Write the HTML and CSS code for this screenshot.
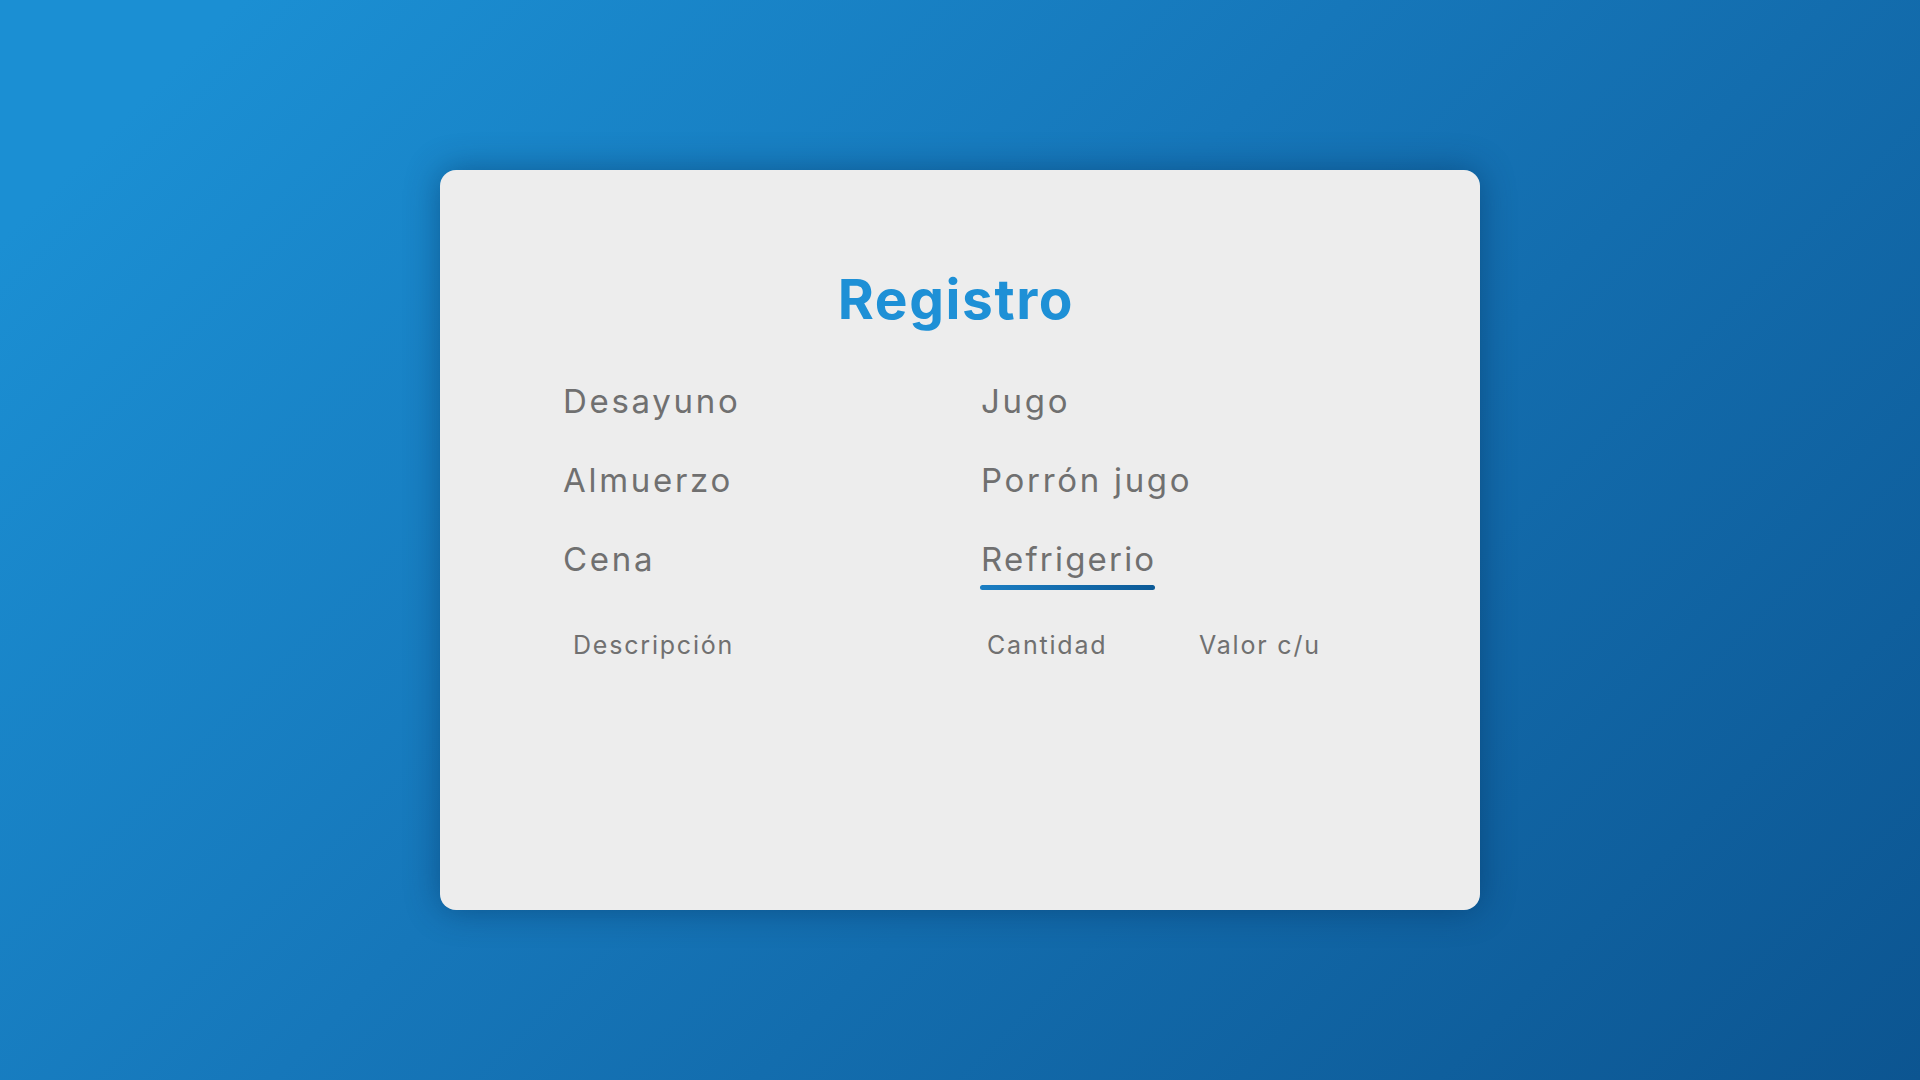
FILE: index.html
```html
<!DOCTYPE html>
<html lang="es">
<head>
<meta charset="utf-8">
<title>Registro</title>
<link rel="stylesheet" href="styles.css">
</head>
<body>
<main class="card">
  <h1 class="title">Registro</h1>
  <ul class="menu">
    <li class="item">Desayuno</li>
    <li class="item">Jugo</li>
    <li class="item">Almuerzo</li>
    <li class="item">Porrón jugo</li>
    <li class="item">Cena</li>
    <li class="item active">Refrigerio</li>
  </ul>
  <div class="table-head">
    <span class="th th-desc">Descripción</span>
    <span class="th th-qty">Cantidad</span>
    <span class="th th-val">Valor c/u</span>
  </div>
</main>
</body>
</html>
```
FILE: styles.css
```css
html, body {
  margin: 0;
  padding: 0;
  height: 100%;
}
body {
  font-family: "Inter", "Noto Sans", sans-serif;
  background: linear-gradient(135deg, #1b8fd3 8%, #1677ba 45%, #0c5591 100%);
  display: flex;
  align-items: center;
  justify-content: center;
  min-height: 100vh;
}
.card {
  box-sizing: border-box;
  width: 1040px;
  height: 740px;
  background: #ededed;
  border-radius: 16px;
  box-shadow: 0 0 34px rgba(5, 40, 80, 0.45);
  padding: 96px 123px 0 123px;
  display: flex;
  flex-direction: column;
}
.title {
  margin: 0 8px 0 0;
  text-align: center;
  font-size: 55px;
  line-height: 66px;
  font-weight: 700;
  color: #1e90d6;
  letter-spacing: 1.6px;
}
.menu {
  list-style: none;
  margin: 49px 0 0 0;
  padding: 0;
  display: grid;
  grid-template-columns: 418px 1fr;
  grid-auto-rows: 40px;
  row-gap: 39px;
}
.item {
  justify-self: start;
  align-self: start;
  display: flex;
  flex-direction: column;
  font-size: 33px;
  line-height: 40px;
  color: #707070;
  letter-spacing: 2.7px;
}
.item.active {
  letter-spacing: 2.2px;
}
.item.active::after {
  content: "";
  display: block;
  height: 5px;
  margin-top: 6px;
  margin-left: -1px;
  margin-right: 1px;
  border-radius: 3px;
  background: linear-gradient(90deg, #1b7ec3, #0c5a97);
}
.table-head {
  margin-top: 51px;
  display: grid;
  grid-template-columns: 418px 218px 1fr;
  font-size: 25px;
  line-height: 30px;
  color: #707070;
  letter-spacing: 1.8px;
}
.th-desc { padding-left: 10px; }
.th-qty { padding-left: 6px; }
```
